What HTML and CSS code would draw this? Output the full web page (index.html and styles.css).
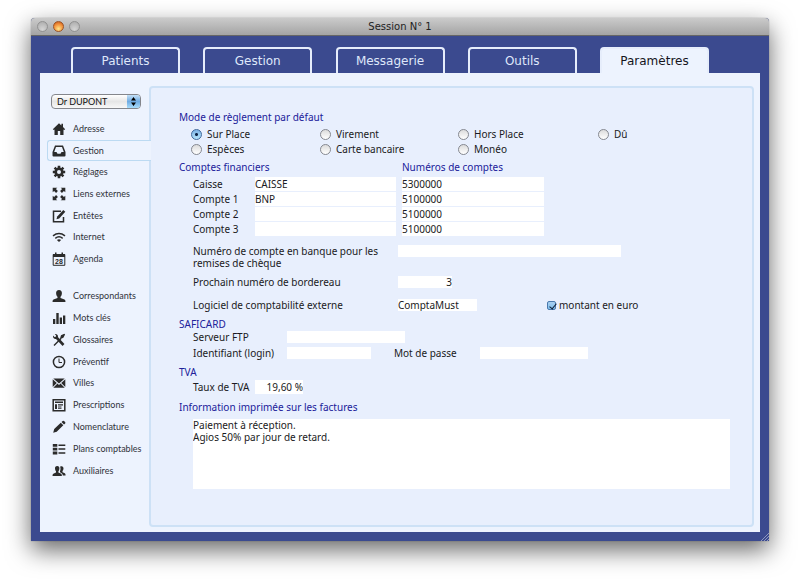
FILE: index.html
```html
<!DOCTYPE html>
<html lang="fr">
<head>
<meta charset="utf-8">
<title>Session N° 1</title>
<link rel="stylesheet" href="styles.css">
</head>
<body>
<div class="window">
  <header class="titlebar">
    <div class="lights">
      <button class="light" type="button" aria-label="Fermer"></button>
      <button class="light light-on" type="button" aria-label="Réduire"></button>
      <button class="light" type="button" aria-label="Agrandir"></button>
    </div>
    <h1 class="title">Session N° 1</h1>
  </header>
  <nav class="tabs">
    <a class="tab" href="#patients">Patients</a>
    <a class="tab" href="#gestion">Gestion</a>
    <a class="tab" href="#messagerie">Messagerie</a>
    <a class="tab" href="#outils">Outils</a>
    <a class="tab tab-active" href="#parametres">Paramètres</a>
  </nav>
  <div class="content">
    <aside class="sidebar">
      <div class="picker">
        <select class="picker-select" aria-label="Praticien"><option>Dr DUPONT</option></select>
        <svg class="picker-arrows" viewBox="0 0 13 13" aria-hidden="true"><path d="M6.500 2 9 5.500H4zM6.500 11 9 7.500H4z"/></svg>
      </div>
      <ul class="menu menu-main">
        <li><a class="item" href="#adresse"><svg class="icon" viewBox="0 0 14 14"><path d="M7 1.200.8 7.200l1 .8.7-.6V13h3.300V9h2.400v4h3.300V7.400l.7.600 1-.8-2.200-2.200V1.800H9.400v1.700z"/></svg>Adresse</a></li>
        <li><a class="item item-active" href="#gestion-compta"><svg class="icon" viewBox="0 0 14 14"><path fill-rule="evenodd" d="M3 1.500h8L13.500 8v3.500q0 1-1 1h-11q-1 0-1-1V8zM4 3 2.200 8h2.300l1 1.800h3l1-1.800h2.300L10 3z"/></svg>Gestion</a></li>
        <li><a class="item" href="#reglages"><svg class="icon" viewBox="0 0 14 14"><circle class="line thick" cx="7" cy="7" r="3.300"/><path d="M5.700.8h2.600v2.400H5.700zM5.700 10.800h2.600v2.400H5.700zM.8 5.700h2.400v2.600H.8zM10.800 5.700h2.400v2.600h-2.400zM1.700 3.500l1.800-1.800 1.700 1.700-1.800 1.800zM10.500 1.700l1.800 1.800-1.700 1.700-1.800-1.800zM12.300 10.500l-1.800 1.800-1.700-1.700 1.800-1.800zM3.500 12.300l-1.800-1.800 1.700-1.700 1.800 1.800z"/></svg>Réglages</a></li>
        <li><a class="item" href="#liens"><svg class="icon" viewBox="0 0 14 14"><path d="M.7.700h4.600L3.900 2.100l2 2-1.800 1.800-2-2L.7 5.300zM13.300.700v4.600l-1.400-1.400-2 2-1.800-1.800 2-2L8.700.7zM.7 13.300V8.700l1.400 1.400 2-2 1.800 1.800-2 2 1.400 1.400zM13.300 13.300H8.700l1.400-1.400-2-2 1.800-1.800 2 2 1.400-1.400z"/></svg>Liens externes</a></li>
        <li><a class="item" href="#entetes"><svg class="icon" viewBox="0 0 14 14"><path class="line" d="M9 2.200H1.500v10.600h10V8"/><path d="M4.500 10.200 5.200 7.500 11.300.9l2 1.900-6.100 6.600z"/></svg>Entêtes</a></li>
        <li><a class="item" href="#internet"><svg class="icon" viewBox="0 0 14 14"><path class="line" d="M1 5.800q6-4.600 12 0M3.300 8.300q3.700-2.900 7.400 0"/><path d="M4.900 9.900q2.100-1.500 4.200 0L7 12z"/></svg>Internet</a></li>
        <li><a class="item" href="#agenda"><svg class="icon" viewBox="0 0 14 14"><path class="line thin" d="M1.200 2.500h11.600v10.800H1.200z"/><path d="M1 2h12v3H1zM3 .5h1.500V3H3zM9.500.5H11V3H9.500z"/><text class="day" x="7" y="12">28</text></svg>Agenda</a></li>
      </ul>
      <ul class="menu menu-data">
        <li><a class="item" href="#correspondants"><svg class="icon" viewBox="0 0 14 14"><path d="M7 1c2 0 3 1.400 2.900 3.200C9.800 6 9.200 7 8.500 7.700v1.400l4 1.500q1 .5 1 2.400H.5q0-1.900 1-2.400l4-1.500V7.700C4.800 7 4.200 6 4.100 4.200 4 2.400 5 1 7 1z"/></svg>Correspondants</a></li>
        <li><a class="item" href="#mots"><svg class="icon" viewBox="0 0 14 14"><path d="M1 8h2.300v5H1zM4.300 2h2.400v11H4.300zM7.700 6.500H10V13H7.700zM11 4.500h2.300V13H11z"/></svg>Mots clés</a></li>
        <li><a class="item" href="#glossaires"><svg class="icon" viewBox="0 0 14 14"><path class="line thick" d="M4 4l7.500 8"/><path class="line" d="M2 12.500 9 5.500"/><path d="M1 2.500 2.500 4l1.300-.3.300-1.300L2.700 1C5 .6 6.500 2.400 5.900 4.200L4.300 5.900C2.400 6.400.6 4.900 1 2.500zM8 5.600 9 2.300l3.300-1.500.8.8-1.700 3.200-2.900 1.300z"/></svg>Glossaires</a></li>
        <li><a class="item" href="#preventif"><svg class="icon" viewBox="0 0 14 14"><circle class="line" cx="7" cy="7" r="5.600"/><path class="line thin" d="M7 3.500v4h3"/></svg>Préventif</a></li>
        <li><a class="item" href="#villes"><svg class="icon" viewBox="0 0 14 14"><path d="M1.300 2.500h11.400L7 7.500zM.7 3.200 4.800 7 .7 11zM13.300 3.200 9.200 7l4.100 4zM5.500 7.600 7 8.900l1.500-1.300 4.200 4.200H1.300z"/></svg>Villes</a></li>
        <li><a class="item" href="#prescriptions"><svg class="icon" viewBox="0 0 14 14"><path class="line" d="M1.200 1.700h11.600v11H1.200z"/><path d="M3 3.600h8v1.500H3zM3 6.200h2v4.800H3zM6 6.200h5v1.300H6zM6 8.500h3.500v1H6zM6 10.200h3.500v.8H6z"/></svg>Prescriptions</a></li>
        <li><a class="item" href="#nomenclature"><svg class="icon" viewBox="0 0 14 14"><path d="M1.200 12.800 2.200 9 8.800 2.700l2.500 2.500-6.600 6.500zM9.500 2l1.200-1.100q.7-.5 1.300.1l1.100 1.100q.6.600.1 1.300L12 4.500z"/></svg>Nomenclature</a></li>
        <li><a class="item" href="#plans"><svg class="icon" viewBox="0 0 14 14"><path d="M.8 2h4.500v2.800H.8zM.8 5.800h4.500v2.800H.8zM.8 9.600h4.500v2.800H.8zM6.500 2.400h6.800v1.500H6.500zM6.500 6.300h6.800v1.500H6.500zM6.500 10.200h6.800v1.500H6.500z"/></svg>Plans comptables</a></li>
        <li><a class="item" href="#auxiliaires"><svg class="icon" viewBox="0 0 14 14"><path d="M5.200 2c1.600 0 2.300 1.100 2.200 2.600Q7.300 6.500 6.400 7.300v1.200l2.700 1.200q.8.400.8 2.300H.5q0-1.900.8-2.300L4 8.500V7.300Q3.100 6.500 3 4.600C2.900 3.100 3.600 2 5.200 2zM8.200 2.500C10.200 1.500 11.600 2.700 11.500 4.500q-.1 1.700-1 2.400v1.300l2.300 1.100q.8.400.8 2.200h-2.800q0-2-1.500-2.600L8 8.200V7.500q1-2.500.2-5z"/></svg>Auxiliaires</a></li>
      </ul>
    </aside>
    <main class="panel">
      <form>
        <fieldset class="modes">
          <legend class="heading">Mode de règlement par défaut</legend>
          <div class="mode-grid">
            <label class="choice"><input type="radio" name="mode" checked>Sur Place</label>
            <label class="choice"><input type="radio" name="mode">Virement</label>
            <label class="choice"><input type="radio" name="mode">Hors Place</label>
            <label class="choice"><input type="radio" name="mode">Dû</label>
            <label class="choice"><input type="radio" name="mode">Espèces</label>
            <label class="choice"><input type="radio" name="mode">Carte bancaire</label>
            <label class="choice"><input type="radio" name="mode">Monéo</label>
          </div>
        </fieldset>

        <table class="accounts">
          <thead>
            <tr><th class="heading" colspan="2">Comptes financiers</th><th class="heading">Numéros de comptes</th></tr>
          </thead>
          <tbody>
            <tr><td class="account-label"><label for="c0">Caisse</label></td><td class="account-name"><input class="field" id="c0" value="CAISSE"></td><td class="account-number"><input class="field" aria-label="Numéro Caisse" value="5300000"></td></tr>
            <tr><td class="account-label"><label for="c1">Compte 1</label></td><td class="account-name"><input class="field" id="c1" value="BNP"></td><td class="account-number"><input class="field" aria-label="Numéro Compte 1" value="5100000"></td></tr>
            <tr><td class="account-label"><label for="c2">Compte 2</label></td><td class="account-name"><input class="field" id="c2"></td><td class="account-number"><input class="field" aria-label="Numéro Compte 2" value="5100000"></td></tr>
            <tr><td class="account-label"><label for="c3">Compte 3</label></td><td class="account-name"><input class="field" id="c3"></td><td class="account-number"><input class="field" aria-label="Numéro Compte 3" value="5100000"></td></tr>
          </tbody>
        </table>

        <div class="row row-bank">
          <label class="label-wide" for="bank">Numéro de compte en banque pour les remises de chèque</label>
          <input class="field field-bank" id="bank">
        </div>
        <div class="row row-slip">
          <label class="label-wide" for="slip">Prochain numéro de bordereau</label>
          <input class="field field-slip" id="slip" value="3">
        </div>
        <div class="row row-software">
          <label class="label-wide" for="software">Logiciel de comptabilité externe</label>
          <input class="field field-software" id="software" value="ComptaMust">
          <label class="check"><input type="checkbox" checked>montant en euro</label>
        </div>

        <h2 class="heading heading-section">SAFICARD</h2>
        <div class="row row-ftp">
          <label class="label-mid" for="ftp">Serveur FTP</label>
          <input class="field field-ftp" id="ftp">
        </div>
        <div class="row row-login">
          <label class="label-mid" for="login">Identifiant (login)</label>
          <input class="field field-login" id="login">
          <label class="label-password" for="password">Mot de passe</label>
          <input class="field field-password" id="password" type="password">
        </div>

        <h2 class="heading heading-section">TVA</h2>
        <div class="row row-vat">
          <label class="label-short" for="vat">Taux de TVA</label>
          <input class="field field-vat" id="vat" value="19,60 %">
        </div>

        <h2 class="heading heading-section"><label for="info">Information imprimée sur les factures</label></h2>
        <textarea class="info" id="info">Paiement à réception.
Agios 50% par jour de retard.</textarea>
      </form>
    </main>
  </div>
  <svg class="grip" viewBox="0 0 9 9" aria-hidden="true"><path d="M1 9 9 1M4 9l5-5M7 9l2-2"/></svg>
</div>
</body>
</html>
```
FILE: styles.css
```css
* {
  box-sizing: border-box;
}

body {
  margin: 0;
  background: #fff;
  color: #1a1a22;
  font: 10px/12px "Noto Sans", Verdana, sans-serif;
}

input,
select,
textarea,
button {
  margin: 0;
  padding: 0;
  border: 0;
  color: inherit;
  font: inherit;
}

.window {
  position: relative;
  margin: 18px 31px 42px;
  padding-bottom: 9px;
  border-radius: 4px 4px 0 0;
  background: #3b4a8f;
  box-shadow: 0 9px 24px rgba(0, 0, 0, .6), 0 0 1px rgba(0, 0, 0, .6);
}

/* Title bar */

.titlebar {
  display: grid;
  grid-template-columns: 1fr auto 1fr;
  align-items: center;
  height: 18px;
  padding: 0 6px;
  border-bottom: 1px solid #666;
  border-radius: 4px 4px 0 0;
  background: linear-gradient(#cbcbcb, #a4a4a4);
}

.lights {
  display: flex;
  gap: 5px;
}

.light {
  width: 11px;
  height: 11px;
  border: 1px solid #929292;
  border-radius: 50%;
  background: radial-gradient(circle at 50% 80%, #d4d4d4, #a9a9a9);
}

.light-on {
  border-color: #9b5426;
  background: radial-gradient(circle at 50% 75%, #ffe58a, #f08a35 60%, #b9501c);
}

.title {
  margin: 0;
  color: #222;
  font-family: "DejaVu Sans", Verdana, sans-serif;
  font-size: 10px;
  font-weight: 400;
}

/* Tabs */

.tabs {
  display: flex;
  justify-content: space-between;
  padding: 11px 60px 0 40px;
}

.tab {
  width: 109px;
  height: 26px;
  border: 2px solid #e6edfb;
  border-bottom: 0;
  border-radius: 4px 4px 0 0;
  color: #dfe7fa;
  font-family: "DejaVu Sans", Verdana, sans-serif;
  font-size: 12px;
  line-height: 24px;
  text-align: center;
  text-decoration: none;
}

.tab-active {
  background: #edf3fe;
  color: #15151c;
}

/* Content */

.content {
  display: flex;
  margin: 0 9px;
  padding: 13px 6px 5px 7px;
  background: #edf3fe;
}

.sidebar {
  width: 102px;
  flex: none;
  padding-top: 8px;
}

.picker {
  position: relative;
  width: 90px;
  margin-left: 4px;
}

.picker-select {
  display: block;
  width: 100%;
  height: 15px;
  padding-left: 5px;
  appearance: none;
  border: 1px solid #84868c;
  border-radius: 4px;
  background: linear-gradient(#fff, #e6e6e6 50%, #f8f8f8);
  color: #111;
  font: 9px/13px Lato, "Noto Sans", sans-serif;
}

.picker-arrows {
  position: absolute;
  top: 1px;
  right: 1px;
  width: 13px;
  height: 13px;
  border-radius: 0 3px 3px 0;
  background: linear-gradient(#c4e0f7, #6fabe2 50%, #a8dcfa);
  pointer-events: none;
}

.menu {
  display: grid;
  grid-auto-rows: 1fr;
  margin: 0;
  padding: 0;
  list-style: none;
}

.menu-main {
  height: 152px;
  margin-top: 9px;
}

.menu-data {
  height: 197px;
  margin-top: 15px;
}

.item {
  display: flex;
  align-items: center;
  gap: 7px;
  height: 100%;
  padding-left: 5px;
  border: 0 solid #bcdaf2;
  color: #30323a;
  font: 9px/12px Lato, "Noto Sans", sans-serif;
  text-decoration: none;
  white-space: nowrap;
}

.item-active {
  position: relative;
  z-index: 1;
  margin-right: -2px;
  padding-left: 4px;
  border-width: 1px 0 1px 1px;
  border-radius: 3px 0 0 3px;
  background: #edf3fe;
}

.icon {
  width: 14px;
  height: 14px;
  flex: none;
  fill: #2b2b2b;
}

.line {
  fill: none;
  stroke: #2b2b2b;
  stroke-width: 1.500;
}

.thick {
  stroke-width: 2.600;
}

.thin {
  stroke-width: 1;
}

.day {
  font: bold 7px "Liberation Sans", sans-serif;
  text-anchor: middle;
}

/* Settings panel */

.panel {
  flex: 1;
  padding: 23px 22px 36px 28px;
  border: 2px solid #cde1f6;
  border-radius: 4px;
  background: #e8effd;
}

.heading {
  margin: 0;
  padding: 0;
  color: #20209a;
  font-size: 10px;
  font-weight: 400;
  text-align: left;
}

.heading-section {
  margin-top: 7px;
}

.modes {
  margin: 0;
  padding: 0;
  border: 0;
}

.mode-grid {
  display: grid;
  grid-template-columns: 129px 138px 140px auto;
  gap: 3px 0;
  margin: 5px 0 0 12px;
}

.choice,
.check {
  display: flex;
  align-items: center;
  gap: 5px;
}

.choice input {
  width: 11px;
  height: 11px;
  appearance: none;
  border: 1px solid #858890;
  border-radius: 50%;
  background: linear-gradient(#dcdcdc, #fff);
}

.choice input:checked {
  border-color: #40699c;
  background: radial-gradient(circle, #0c2244 0 1px, transparent 2px), linear-gradient(#7cb1e4, #b5e4fb);
}

.accounts {
  margin-top: 6px;
  border-collapse: collapse;
}

.accounts th {
  height: 16px;
  vertical-align: top;
}

.accounts td {
  padding: 0 0 1px;
}

.accounts .account-label {
  width: 76px;
  padding-left: 14px;
}

.accounts .account-name {
  width: 147px;
  padding-right: 6px;
}

.accounts .account-number {
  width: 142px;
}

.field {
  display: block;
  height: 12px;
  border-radius: 0;
  background: #fff;
}

.accounts .field {
  width: 100%;
  height: 14px;
}

.row {
  display: flex;
  align-items: flex-start;
  padding-left: 14px;
}

.row-bank {
  margin-top: 8px;
}

.row-slip {
  margin-top: 7px;
}

.row-software {
  margin-top: 11px;
}

.row-ftp {
  margin-top: 1px;
}

.row-login {
  margin-top: 4px;
}

.row-vat {
  align-items: center;
  margin-top: 2px;
}

.label-wide {
  width: 205px;
  padding-right: 10px;
}

.label-mid {
  width: 94px;
}

.label-short {
  width: 62px;
}

.label-password {
  width: 86px;
  margin-left: 23px;
}

.field-bank {
  width: 223px;
}

.field-slip {
  width: 54px;
  text-align: right;
}

.field-software {
  width: 79px;
}

.field-ftp {
  width: 118px;
}

.field-login {
  width: 84px;
}

.field-password {
  width: 108px;
}

.field-vat {
  width: 48px;
  height: 14px;
  text-align: right;
}

.check {
  gap: 3px;
  margin-left: 70px;
}

.check input {
  width: 9px;
  height: 9px;
  appearance: none;
  border: 1px solid #4a79ad;
  border-radius: 2px;
  background: linear-gradient(#a9cff0, #7fc0ee);
}

.check input:checked::before {
  display: block;
  width: 3px;
  height: 6px;
  margin-left: 3px;
  border: solid #0c1a33;
  border-width: 0 1px 1px 0;
  content: "";
  rotate: 40deg;
}

.info {
  display: block;
  width: calc(100% - 14px);
  height: 70px;
  margin: 6px 0 0 14px;
  background: #fff;
  resize: none;
}

.grip {
  position: absolute;
  right: 0;
  bottom: 0;
  width: 9px;
  height: 9px;
  fill: none;
  stroke: #8f98bd;
}
```
